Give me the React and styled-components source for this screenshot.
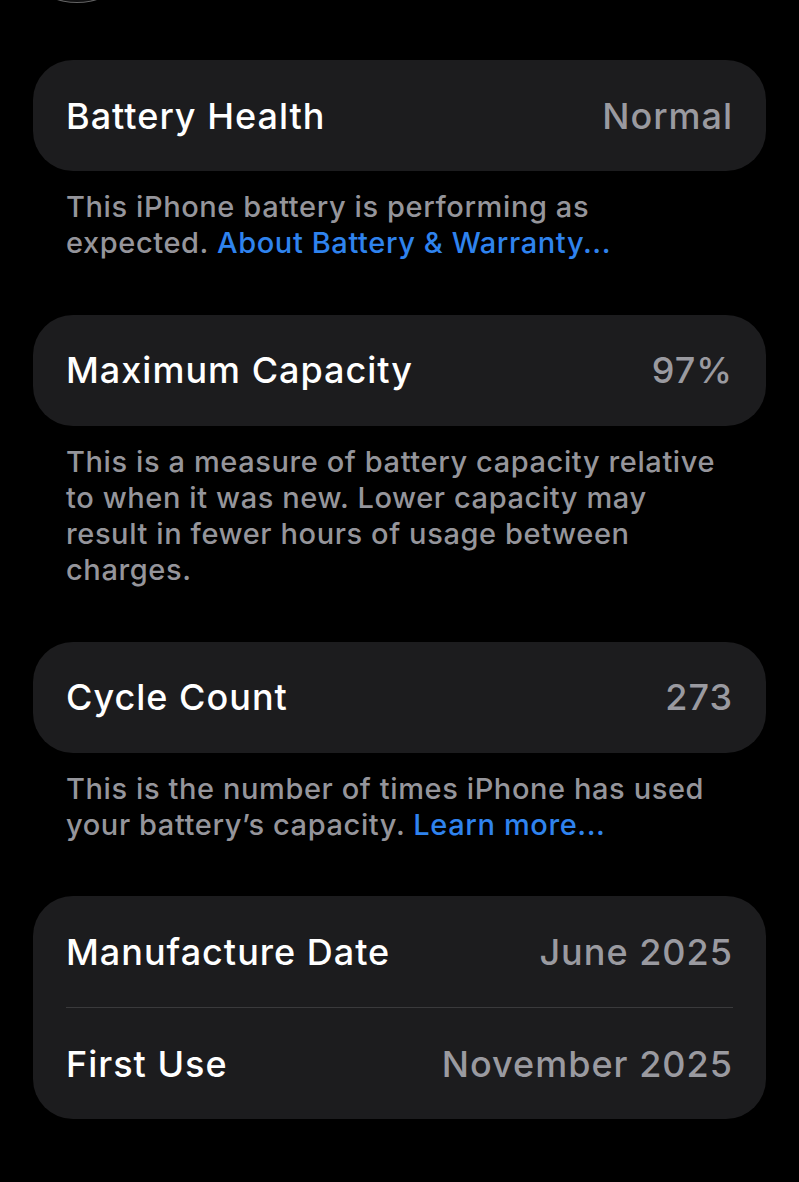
import React from 'react';
import styled, { createGlobalStyle } from 'styled-components';

const GlobalStyle = createGlobalStyle`
  html, body {
    margin: 0;
    padding: 0;
    background: #000;
  }
  body {
    font-family: Inter, "Noto Sans", "Liberation Sans", sans-serif;
    -webkit-font-smoothing: antialiased;
  }
`;

const Page = styled.div`
  min-height: 1182px;
  background: #000;
  padding: 0 33px 60px;
  box-sizing: border-box;
`;

const Header = styled.div`
  height: 60px;
  overflow: hidden;
`;

const BackButton = styled.div`
  width: 136px;
  height: 136px;
  margin-top: -133px;
  margin-left: -24px;
  border-radius: 50%;
  background: #111112;
  box-shadow: inset 0 -1px 0 rgba(255, 255, 255, 0.35);
`;

const Section = styled.section`
  margin-bottom: 53px;
`;

const Card = styled.div`
  background: #1c1c1e;
  border-radius: 40px;
  overflow: hidden;
`;

const Row = styled.div`
  height: 111px;
  padding: 0 33px;
  display: flex;
  align-items: center;
  justify-content: space-between;
  font-size: 36px;
  font-weight: 500;
  letter-spacing: 1px;
`;

const Label = styled.span`
  color: #fff;
`;

const Value = styled.span`
  color: #9a9aa0;
`;

const Divider = styled.div`
  height: 1px;
  margin: 0 33px;
  background: #3a3a3c;
`;

const Footer = styled.p`
  margin: 0;
  padding: 18px 33px 0;
  color: #95959b;
  font-size: 29px;
  font-weight: 500;
  line-height: 36.3px;
  letter-spacing: 0.6px;
`;

const Link = styled.span`
  color: #2f83ee;
`;

const rows = [
  {
    label: 'Battery Health',
    value: 'Normal',
    footer: (
      <>
        This iPhone battery is performing as
        <br />
        expected. <Link>About Battery &amp; Warranty...</Link>
      </>
    ),
  },
  {
    label: 'Maximum Capacity',
    value: '97%',
    footer: (
      <>
        This is a measure of battery capacity relative
        <br />
        to when it was new. Lower capacity may
        <br />
        result in fewer hours of usage between
        <br />
        charges.
      </>
    ),
  },
  {
    label: 'Cycle Count',
    value: '273',
    footer: (
      <>
        This is the number of times iPhone has used
        <br />
        your battery’s capacity. <Link>Learn more...</Link>
      </>
    ),
  },
];

export default function App() {
  return (
    <>
      <GlobalStyle />
      <Page>
        <Header>
          <BackButton />
        </Header>
        {rows.map((r) => (
          <Section key={r.label}>
            <Card>
              <Row>
                <Label>{r.label}</Label>
                <Value>{r.value}</Value>
              </Row>
            </Card>
            <Footer>{r.footer}</Footer>
          </Section>
        ))}
        <Card>
          <Row>
            <Label>Manufacture Date</Label>
            <Value>June 2025</Value>
          </Row>
          <Divider />
          <Row>
            <Label>First Use</Label>
            <Value>November 2025</Value>
          </Row>
        </Card>
      </Page>
    </>
  );
}
